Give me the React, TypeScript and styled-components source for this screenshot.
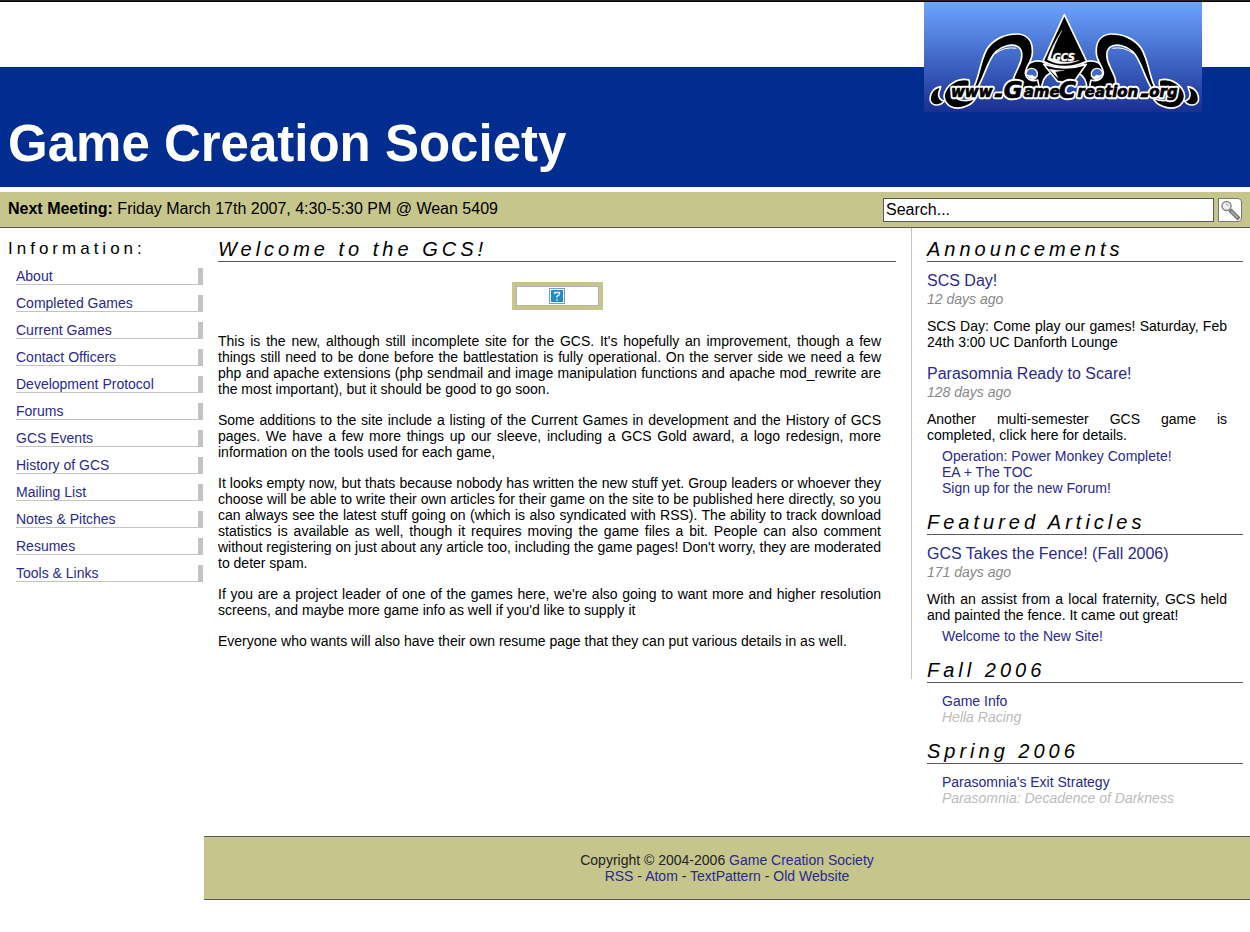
import React from "react";
import styled, { createGlobalStyle } from "styled-components";

const khaki = "#c5c58c";
const rule = "#5a5a5a";
const silver = "#c3c3c3";
const linkBlue = "#2a2a8c";

const GlobalStyle = createGlobalStyle`
  body {
    margin: 0;
    background: #fff;
    color: #000;
    font: 14px/16px "Liberation Sans", Arial, Helvetica, sans-serif;
  }
  a { color: ${linkBlue}; text-decoration: none; }
  a:hover { text-decoration: underline; }
  h1, h2, h3, p, ul { margin: 0; padding: 0; }
  ul { list-style: none; }
`;

const TopStrip = styled.div`
  height: 2px;
  background: linear-gradient(#222 1px, #000 1px);
`;

const Header = styled.header`
  position: relative;
  padding-top: 65px;
`;

const Banner = styled.div`
  display: flex;
  align-items: flex-end;
  box-sizing: border-box;
  min-height: 120px;
  padding: 0 8px 14px;
  background: #002d8f;
`;

const SiteTitle = styled.h1`
  color: #fff;
  font-size: 51px;
  line-height: 58px;
`;

const LogoLink = styled.a`
  position: absolute;
  top: 0;
  right: 48px;
  svg { display: block; }
`;

const MeetingBar = styled.div`
  display: flex;
  align-items: center;
  justify-content: space-between;
  height: 35px;
  margin-top: 5px;
  padding: 0 8px;
  background: ${khaki};
  border-bottom: 1px solid ${rule};
`;

const Meeting = styled.p`
  padding-bottom: 2px;
  font-size: 16px;
  line-height: 18px;
`;

const SearchForm = styled.form`
  display: flex;
  gap: 4px;
  width: 359px;
`;

const SearchInput = styled.input`
  flex: 1;
  min-width: 0;
  box-sizing: border-box;
  height: 24px;
  padding: 0 2px;
  border: 1px solid ${rule};
  border-radius: 0;
  background: #fff;
  color: #000;
  font: 16px "Liberation Sans", Arial, sans-serif;
`;

const SearchButton = styled.button`
  display: block;
  box-sizing: border-box;
  width: 24px;
  height: 24px;
  padding: 0;
  border: 1px solid #777;
  border-radius: 0 4px 4px 0;
  background: #fff;
  svg { display: block; }
`;

const Columns = styled.div`
  display: flex;
  align-items: flex-start;
`;

const Nav = styled.nav`
  flex: none;
  width: 195px;
  padding: 12px 1px 0 8px;
`;

const NavTitle = styled.h2`
  font-size: 17px;
  font-weight: 400;
  line-height: 18px;
  letter-spacing: 4px;
`;

const NavList = styled.ul`
  display: grid;
  gap: 10px;
  padding: 10px 0 0 8px;
`;

const NavItem = styled.li`
  height: 16px;
  border-right: 5px solid ${silver};
  border-bottom: 1px solid ${silver};
`;

const Body = styled.div`
  flex: 1;
  min-width: 0;
`;

const Content = styled.div`
  display: flex;
  align-items: flex-start;
`;

const Main = styled.main`
  flex: 1;
  min-width: 0;
  padding: 9px 15px 15px 14px;
  border-right: 1px solid ${silver};
`;

const SectionTitle = styled.h2`
  border-bottom: 1px solid ${rule};
  font-size: 20px;
  font-style: italic;
  font-weight: 400;
  line-height: 24px;
  letter-spacing: 4px;
`;

const Picture = styled.div`
  display: flex;
  align-items: center;
  justify-content: center;
  box-sizing: border-box;
  width: 91px;
  height: 28px;
  margin: 20px auto 23px;
  border: 4px solid ${khaki};
  outline: 1px solid #b5b5b5;
  outline-offset: -5px;
`;

const Paragraph = styled.p`
  margin: 0 15px 15px 0;
  text-align: justify;
`;

const Sidebar = styled.aside`
  flex: none;
  width: 316px;
  padding: 9px 7px 30px 15px;
`;

const Section = styled.section`
  & + & { margin-top: 14px; }
`;

const Entry = styled.article`
  margin-top: 9px;
  & + & { margin-top: 14px; }
`;

const EntryTitle = styled.h3`
  font-size: 16px;
  font-weight: 400;
  line-height: 19px;
`;

const EntryDate = styled.p`
  color: #888;
  font-style: italic;
  line-height: 18px;
`;

const EntryText = styled.p`
  margin: 10px 16px 0 0;
  text-align: justify;
`;

const LinkList = styled.ul<{ $gap: number }>`
  padding: ${(p) => p.$gap}px 0 0 15px;
`;

const GameName = styled.em`
  display: block;
  color: #bbb;
`;

const Footer = styled.footer`
  padding: 15px 0;
  border-top: 1px solid ${rule};
  border-bottom: 1px solid ${rule};
  background: ${khaki};
  color: #222;
  text-align: center;
`;

const Tentacle = () => (
  <g fill="#000" stroke="#fff" strokeWidth="5" strokeLinejoin="round">
    <path d="M392 190C372 176 344 184 335 200L328 222C326 244 346 254 362 244C360 252 359 258 360 270L380 270C380 246 390 226 408 218Z" />
    <path d="M172 268C193 240 192 190 216 147C237 115 275 101 310 102C341 105 354 128 352 160C350 186 330 202 331 220C334 238 352 246 368 240L374 268L296 268C288 239 301 222 311 200C323 176 325 151 309 140C289 130 262 138 243 155C219 177 210 227 186 266Z" />
    <circle cx="350" cy="222" r="17" fill="#4566c5" strokeWidth="4" />
    <path d="M333 222Q348 247 369 229Q356 232 352 225Q342 229 333 222Z" fill="#fff" strokeWidth="1" />
    <path d="M241 161Q268 139 304 145" fill="none" strokeWidth="3" />
    <path d="M77 260C54 264 43 282 46 303C54 320 76 318 88 303C76 302 69 292 71 280Z" />
    <path d="M162 240C128 232 90 256 87 289C91 321 122 332 153 319C170 312 177 305 181 295C151 309 119 300 119 283C121 269 143 267 158 267Q166 255 162 240Z" />
  </g>
);

const WordMark = () => (
  <>
    <text x="108" y="291">www</text>
    <text x="326" y="291">ame</text>
    <text x="487" y="291">reation</text>
    <text x="703" y="291">org</text>
    <path d="M242 281h19l-3 10h-19zM680 281h20l-3 10h-20z" />
    <g fontFamily="DejaVu Sans, sans-serif" fontStretch="normal" fontSize="69">
      <text x="266" y="293">G</text>
      <text x="432" y="293">C</text>
    </g>
  </>
);

const Logo = () => (
  <svg width="278" height="110" viewBox="27 6 834 330" role="img" aria-label="www.GameCreation.org">
    <defs>
      <linearGradient id="sky" x1="0" y1="0" x2="0" y2="1">
        <stop offset="0" stopColor="#6ca4ff" />
        <stop offset="1" stopColor="#192f91" />
      </linearGradient>
    </defs>
    <rect x="27" y="6" width="834" height="330" fill="url(#sky)" />
    <Tentacle />
    <g transform="translate(896 0) scale(-1 1)">
      <Tentacle />
    </g>
    <g stroke="#fff" strokeWidth="5" strokeLinejoin="round">
      <path d="M386 193Q448 214 514 193L480 241L468 250L427 244Z" />
      <path d="M448 44L384 184Q448 216 515 184Z" />
      <path d="M441 91Q408 143 397 179Q440 203 493 181Q443 194 407 174Q416 137 441 91Z" fill="#fff" strokeWidth="1" />
      <path d="M402 207L429 235L421 215L448 211Q423 212 402 207Z" fill="#fff" strokeWidth="1" />
    </g>
    <text
      x="413"
      y="182"
      fill="#fff"
      stroke="#fff"
      fontFamily="DejaVu Sans, sans-serif"
      fontWeight="700"
      fontStyle="italic"
      fontSize="30"
    >
      GCS
    </text>
    <g
      fontFamily="DejaVu Sans Condensed, DejaVu Sans, sans-serif"
      fontStretch="condensed"
      fontWeight="700"
      fontStyle="italic"
      fontSize="50"
      strokeLinejoin="round"
    >
      <g fill="#fff" stroke="#fff" strokeWidth="13"><WordMark /></g>
      <g fill="#000" stroke="#000" strokeWidth="2"><WordMark /></g>
    </g>
  </svg>
);

const SearchIcon = () => (
  <svg width="22" height="22" viewBox="0 0 22 22" aria-hidden="true">
    <path d="M11 11L20 20" stroke="#666" strokeWidth="4" />
    <path d="M12 12L19 19" stroke="#aaa" strokeWidth="2" />
    <circle cx="7.500" cy="7" r="4.500" fill="#eee" stroke="#888" strokeWidth="1.500" />
    <path d="M7 5q2 0 2 2" fill="none" stroke="#999" />
  </svg>
);

const MissingImage = () => (
  <svg width="16" height="16" viewBox="0 0 16 16" role="img" aria-label="Missing image">
    <rect x="0.500" y="0.500" width="15" height="15" fill="#fff" stroke="#6f9ecb" />
    <rect x="2" y="2" width="12" height="12" fill="#2489c5" />
    <path d="M5.700 6V4.500h4.600v2.200L8 8.300v1.200M8 11v1.500" fill="none" stroke="#d9f0fb" strokeWidth="1.600" />
  </svg>
);

const pages = [
  "About", "Completed Games", "Current Games", "Contact Officers",
  "Development Protocol", "Forums", "GCS Events", "History of GCS",
  "Mailing List", "Notes & Pitches", "Resumes", "Tools & Links",
];

const paragraphs = [
  "This is the new, although still incomplete site for the GCS. It's hopefully an improvement, though a few things still need to be done before the battlestation is fully operational. On the server side we need a few php and apache extensions (php sendmail and image manipulation functions and apache mod_rewrite are the most important), but it should be good to go soon.",
  "Some additions to the site include a listing of the Current Games in development and the History of GCS pages. We have a few more things up our sleeve, including a GCS Gold award, a logo redesign, more information on the tools used for each game,",
  "It looks empty now, but thats because nobody has written the new stuff yet. Group leaders or whoever they choose will be able to write their own articles for their game on the site to be published here directly, so you can always see the latest stuff going on (which is also syndicated with RSS). The ability to track download statistics is available as well, though it requires moving the game files a bit. People can also comment without registering on just about any article too, including the game pages! Don't worry, they are moderated to deter spam.",
  "If you are a project leader of one of the games here, we're also going to want more and higher resolution screens, and maybe more game info as well if you'd like to supply it",
  "Everyone who wants will also have their own resume page that they can put various details in as well.",
];

type NewsProps = { title: string; date: string; text: string };

const News = ({ title, date, text }: NewsProps) => (
  <Entry>
    <EntryTitle><a href="#">{title}</a></EntryTitle>
    <EntryDate>{date}</EntryDate>
    <EntryText>{text}</EntryText>
  </Entry>
);

export default function App() {
  return (
    <>
      <GlobalStyle />
      <TopStrip />
      <Header>
        <Banner>
          <SiteTitle>Game Creation Society</SiteTitle>
        </Banner>
        <LogoLink href="#"><Logo /></LogoLink>
      </Header>
      <MeetingBar>
        <Meeting><strong>Next Meeting:</strong> Friday March 17th 2007, 4:30-5:30 PM @ Wean 5409</Meeting>
        <SearchForm onSubmit={(e) => e.preventDefault()}>
          <SearchInput type="text" aria-label="Search" defaultValue="Search..." />
          <SearchButton type="submit" aria-label="Go"><SearchIcon /></SearchButton>
        </SearchForm>
      </MeetingBar>
      <Columns>
        <Nav>
          <NavTitle>Information:</NavTitle>
          <NavList>
            {pages.map((page) => (
              <NavItem key={page}><a href="#">{page}</a></NavItem>
            ))}
          </NavList>
        </Nav>
        <Body>
          <Content>
            <Main>
              <SectionTitle>Welcome to the GCS!</SectionTitle>
              <Picture><MissingImage /></Picture>
              {paragraphs.map((text) => <Paragraph key={text}>{text}</Paragraph>)}
            </Main>
            <Sidebar>
              <Section>
                <SectionTitle>Announcements</SectionTitle>
                <News title="SCS Day!" date="12 days ago" text="SCS Day: Come play our games! Saturday, Feb 24th 3:00 UC Danforth Lounge" />
                <News title="Parasomnia Ready to Scare!" date="128 days ago" text="Another multi-semester GCS game is completed, click here for details." />
                <LinkList $gap={5}>
                  <li><a href="#">Operation: Power Monkey Complete!</a></li>
                  <li><a href="#">EA + The TOC</a></li>
                  <li><a href="#">Sign up for the new Forum!</a></li>
                </LinkList>
              </Section>
              <Section>
                <SectionTitle>Featured Articles</SectionTitle>
                <News title="GCS Takes the Fence! (Fall 2006)" date="171 days ago" text="With an assist from a local fraternity, GCS held and painted the fence. It came out great!" />
                <LinkList $gap={5}>
                  <li><a href="#">Welcome to the New Site!</a></li>
                </LinkList>
              </Section>
              <Section>
                <SectionTitle>Fall 2006</SectionTitle>
                <LinkList $gap={10}>
                  <li><a href="#">Game Info</a><GameName>Hella Racing</GameName></li>
                </LinkList>
              </Section>
              <Section>
                <SectionTitle>Spring 2006</SectionTitle>
                <LinkList $gap={10}>
                  <li><a href="#">Parasomnia's Exit Strategy</a><GameName>Parasomnia: Decadence of Darkness</GameName></li>
                </LinkList>
              </Section>
            </Sidebar>
          </Content>
          <Footer>
            <p>Copyright © 2004-2006 <a href="#">Game Creation Society</a></p>
            <p><a href="#">RSS</a> - <a href="#">Atom</a> - <a href="#">TextPattern</a> - <a href="#">Old Website</a></p>
          </Footer>
        </Body>
      </Columns>
    </>
  );
}
